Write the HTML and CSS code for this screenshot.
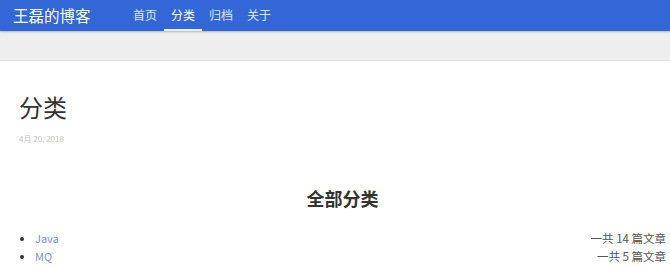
FILE: index.html
```html
<!DOCTYPE html>
<html lang="zh">
<head>
<meta charset="utf-8">
<link rel="stylesheet" href="styles.css">
</head>
<body>
<header class="topbar">
  <div class="brand">王磊的博客</div>
  <nav class="nav">
    <a class="nav-item">首页</a>
    <a class="nav-item active">分类</a>
    <a class="nav-item">归档</a>
    <a class="nav-item">关于</a>
  </nav>
</header>
<div class="band"></div>
<main class="main">
  <h1 class="title">分类</h1>
  <div class="date">4月 20, 2018</div>
  <h2 class="section">全部分类</h2>
  <ul class="cats">
    <li class="cat"><a class="cat-name">Java</a><span class="cat-count">一共 14 篇文章</span></li>
    <li class="cat"><a class="cat-name">MQ</a><span class="cat-count">一共 5 篇文章</span></li>
  </ul>
</main>
</body>
</html>
```
FILE: styles.css
```css
html, body {
  margin: 0;
  padding: 0;
  background: #fff;
  font-family: "Noto Sans CJK SC", "Noto Sans", sans-serif;
}
.topbar {
  height: 31px;
  background: #3366d6;
  display: flex;
  align-items: center;
  box-shadow: 0 1px 2px rgba(0,0,0,0.25);
  position: relative;
}
.brand {
  color: #fff;
  font-size: 15.5px;
  margin-left: 13px;
  width: 113px;
  line-height: 31px;
}
.nav {
  display: flex;
  height: 31px;
}
.nav-item {
  color: #dfe6fa;
  font-size: 12px;
  line-height: 29px;
  padding: 0 7px;
  border-bottom: 2px solid transparent;
}
.nav-item.active {
  color: #fff;
  border-bottom-color: #eef2ff;
}
.band {
  height: 29px;
  background: #eeeeee;
  border-bottom: 1px solid #e2e2e2;
}
.main {
  padding: 0 4px 0 19px;
}
.title {
  margin: 30px 0 0;
  font-size: 24px;
  font-weight: 400;
  line-height: 32px;
  color: #333;
}
.date {
  margin-top: 10px;
  font-size: 8px;
  color: #c4c4c4;
  line-height: 12px;
}
.section {
  margin: 41px 0 0;
  text-align: center;
  font-size: 18px;
  font-weight: 700;
  color: #333;
  line-height: 24px;
}
.cats {
  margin: 19px 0 0;
  padding-left: 16px;
  font-size: 11px;
  line-height: 18px;
}
.cat {
  color: #333;
}
.cat-name {
  color: #7f93d6;
}
.cat-count {
  float: right;
  color: #555;
  font-size: 11.5px;
}
```
